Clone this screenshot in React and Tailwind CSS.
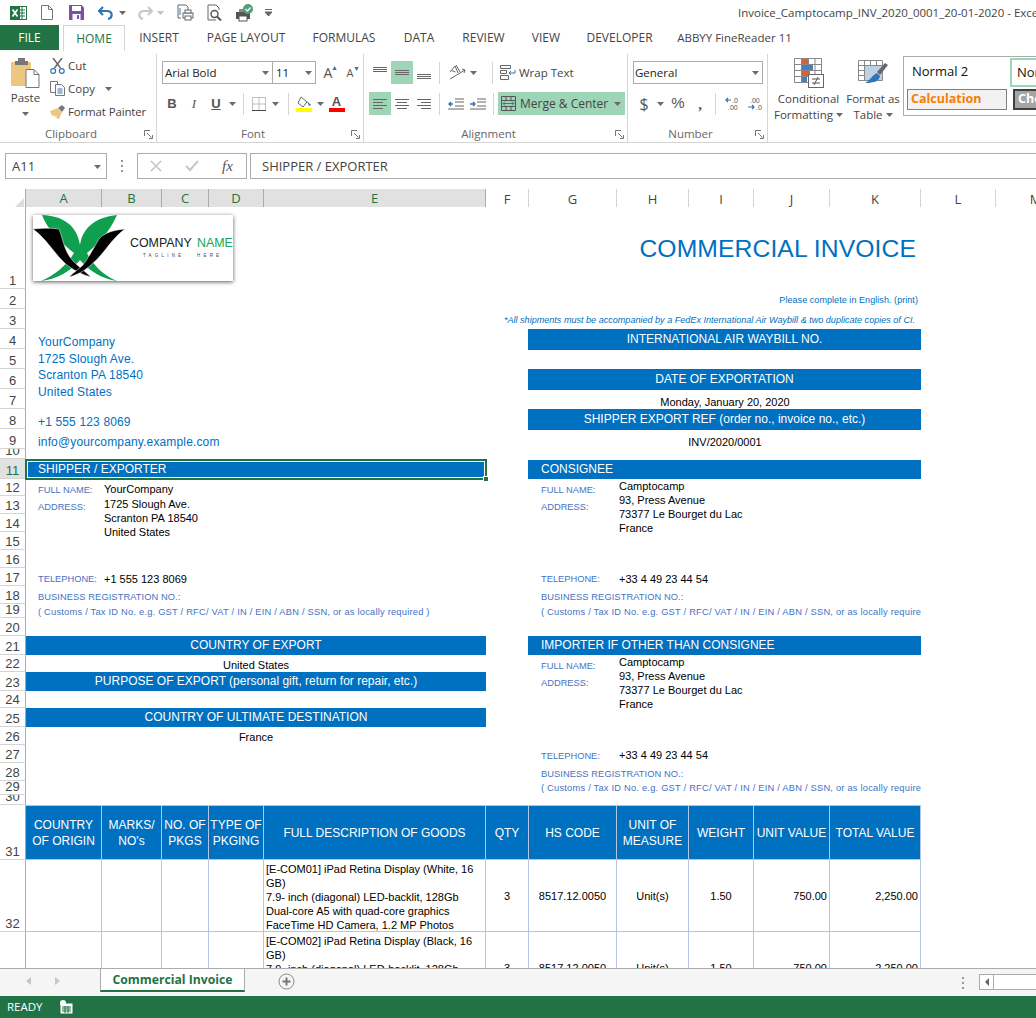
import React from 'react';

const SHEET_COLS = 'grid-cols-[26px_76px_60px_47px_55px_222px_43px_88px_72px_65px_76px_91px_75px_80px]';

const Chevron = ({ className = '' }) => (
  <svg width="7" height="4" viewBox="0 0 7 4" className={`shrink-0 ${className}`}>
    <path d="M0 0h7L3.5 4z" fill="#6a6a6a" />
  </svg>
);

const Launcher = () => (
  <svg width="9" height="9" viewBox="0 0 9 9">
    <path d="M0.5 6V0.5H6M3 3l4.5 4.5M8.5 5v3.5H5" fill="none" stroke="#777" />
  </svg>
);

const Sep = ({ className = 'mx-[5px]' }) => <div className={`w-px h-[22px] bg-[#d4d4d4] shrink-0 ${className}`} />;

const Btn = ({ w = 'w-[22px]', active, children }) => (
  <div className={`${w} h-[23px] shrink-0 flex items-center justify-center ${active ? 'bg-[#9fd5b7]' : ''}`}>{children}</div>
);

const Lines = ({ ys, widths, x = [] }) => (
  <svg width="16" height="16" viewBox="0 0 16 16">
    {ys.map((y, i) => (
      <rect key={i} x={x[i] ?? 1} y={y} width={widths[i]} height="1" fill="#666" />
    ))}
  </svg>
);

const ExcelLogo = () => (
  <svg width="17" height="16" viewBox="0 0 17 16" className="shrink-0">
    <rect x="6" y="1.5" width="10.5" height="13" fill="#fff" stroke="#217346" />
    <path d="M9 5h6M9 8h6M9 11h6M12 2v12" stroke="#217346" />
    <rect x="0" y="1" width="10" height="14" fill="#217346" />
    <path d="M2.5 4.5l5 7M7.5 4.5l-5 7" stroke="#fff" strokeWidth="1.7" />
  </svg>
);

const PrintPreview = () => (
  <svg width="17" height="17" viewBox="0 0 17 17">
    <path d="M1 1h8l2 2v3M1 1v13h3" fill="#fff" stroke="#666" />
    <rect x="6" y="9" width="10" height="5" fill="#fff" stroke="#666" />
    <rect x="8" y="6" width="6" height="3" fill="#fff" stroke="#666" />
    <rect x="8" y="12" width="6" height="4" fill="#fff" stroke="#666" />
    <path d="M3 4v7" stroke="#2f75b5" />
  </svg>
);

const Magnifier = () => (
  <svg width="16" height="17" viewBox="0 0 16 17">
    <path d="M1 1h8l3 3v2M1 1v15h8" fill="#fff" stroke="#666" />
    <circle cx="7.5" cy="10" r="3.5" fill="#fff" stroke="#555" strokeWidth="1.4" />
    <path d="M10 12.5l4 4" stroke="#555" strokeWidth="2" />
  </svg>
);

const QuickPrint = () => (
  <svg width="18" height="18" viewBox="0 0 18 18">
    <rect x="0" y="8" width="14" height="7" fill="#555" />
    <rect x="3" y="5" width="8" height="3" fill="#888" />
    <rect x="3" y="12" width="8" height="5" fill="#fff" stroke="#555" />
    <circle cx="12" cy="5" r="5" fill="#4f9e7c" />
    <path d="M9.5 5l2 2 3-3.5" fill="none" stroke="#fff" strokeWidth="1.3" />
  </svg>
);

const TitleBar = () => (
  <div className="h-[25px] flex items-center bg-white whitespace-nowrap overflow-hidden">
    <div className="w-[738px] shrink-0 flex items-center pl-[10px]">
      <ExcelLogo />
      <svg width="12" height="15" viewBox="0 0 12 15" className="ml-[14px]">
        <path d="M0.5 0.5h7l4 4v10h-11z" fill="#fff" stroke="#777" />
        <path d="M7.5 0.5v4h4" fill="none" stroke="#777" />
      </svg>
      <svg width="15" height="15" viewBox="0 0 15 15" className="ml-[16px]">
        <path d="M0 0h12.5L15 2.5V15H0z" fill="#7d4fa8" />
        <rect x="3" y="1" width="9" height="5" fill="#fff" />
        <rect x="3.5" y="9" width="8" height="6" fill="#fff" />
        <rect x="8" y="10" width="2" height="4" fill="#7d4fa8" />
      </svg>
      <svg width="16" height="14" viewBox="0 0 16 14" className="ml-[14px]">
        <path d="M5 1L1 5l4 4M1.5 5H9c6 0 6 7 1 8" fill="none" stroke="#2f75b5" strokeWidth="2.2" />
      </svg>
      <Chevron className="ml-[5px]" />
      <svg width="16" height="14" viewBox="0 0 16 14" className="ml-[11px]">
        <path d="M11 1l4 4-4 4M14.5 5H7c-6 0-6 7-1 8" fill="none" stroke="#c8c8c8" strokeWidth="2.2" />
      </svg>
      <div className="ml-[4px] opacity-40"><Chevron /></div>
      <div className="ml-[13px]"><PrintPreview /></div>
      <div className="ml-[13px]"><Magnifier /></div>
      <div className="ml-[13px]"><QuickPrint /></div>
      <svg width="7" height="7" viewBox="0 0 7 7" className="ml-[11px]">
        <path d="M0 0.5h7M0 3h7l-3.5 4z" stroke="#666" fill="#666" strokeWidth="1" />
      </svg>
    </div>
    <div className="shrink-0 text-[11.5px] text-[#444]">Invoice_Camptocamp_INV_2020_0001_20-01-2020 - Excel</div>
  </div>
);

const TABS = [
  ['INSERT', 'w-[68px]'],
  ['PAGE LAYOUT', 'w-[106px]'],
  ['FORMULAS', 'w-[90px]'],
  ['DATA', 'w-[60px]'],
  ['REVIEW', 'w-[69px]'],
  ['VIEW', 'w-[56px]'],
  ['DEVELOPER', 'w-[91px]'],
  ['ABBYY FineReader 11', 'w-[139px] text-[11.5px]'],
];

const TabRow = () => (
  <div className="h-[25px] flex text-[12px] text-[#444] whitespace-nowrap">
    <div className="w-[59px] bg-[#217346] text-white flex items-center justify-center">FILE</div>
    <div className="w-[4px]" />
    <div className="w-[62px] border border-b-0 border-[#d4d4d4] bg-white text-[#217346] flex items-center justify-center relative z-10 h-[26px]">HOME</div>
    {TABS.map(([label, w]) => (
      <div key={label} className={`${w} flex items-center justify-center`}>{label}</div>
    ))}
  </div>
);

const Group = ({ w, label, launcher, children }) => (
  <div className={`${w} h-[88px] shrink-0 flex flex-col border-r border-[#d4d4d4]`}>
    <div className="flex-1 min-h-0">{children}</div>
    <div className="h-[16px] pr-[14px] relative flex items-center justify-center text-[#666] text-[11.5px]">
      {label}
      {launcher && <div className="absolute right-[3px] top-[4px] flex"><Launcher /></div>}
    </div>
  </div>
);

const Clipboard = () => (
  <Group w="w-[157px]" label="Clipboard" launcher>
    <div className="flex">
      <div className="w-[50px] flex flex-col items-center pt-[4px] pl-[1px]">
        <svg width="29" height="30" viewBox="0 0 29 30">
          <rect x="0" y="4" width="20" height="24" rx="1" fill="#edc77f" />
          <rect x="7" y="0" width="7" height="5" fill="#777" />
          <rect x="4" y="3" width="13" height="4" fill="#777" />
          <path d="M15 11.5h8l5 5v13H15z" fill="#fff" stroke="#777" />
          <path d="M23 11.5v5h5" fill="none" stroke="#777" />
        </svg>
        <div className="text-[11.5px] text-[#444] mt-[2px] leading-[16px]">Paste</div>
        <Chevron className="mt-[6px]" />
      </div>
      <div className="flex flex-col text-[11.5px] text-[#444]">
        <div className="h-[23px] flex items-center gap-[3px]">
          <svg width="15" height="16" viewBox="0 0 15 16">
            <path d="M3 0l7.5 10M12 0L4.5 10" stroke="#666" strokeWidth="1.5" />
            <circle cx="3.2" cy="13" r="2.4" fill="#fff" stroke="#2f75b5" strokeWidth="1.2" />
            <circle cx="11.8" cy="13" r="2.4" fill="#fff" stroke="#2f75b5" strokeWidth="1.2" />
          </svg>
          Cut
        </div>
        <div className="h-[23px] flex items-center gap-[3px]">
          <svg width="15" height="15" viewBox="0 0 15 15">
            <path d="M0.5 0.5h7v11h-7z" fill="#fff" stroke="#777" />
            <path d="M5.5 3.5h6l3 3v8h-9z" fill="#fff" stroke="#777" />
            <path d="M7.5 8h5M7.5 10h5M7.5 12h5" stroke="#2f75b5" />
          </svg>
          Copy
          <Chevron className="ml-[7px]" />
        </div>
        <div className="h-[23px] flex items-center gap-[3px] whitespace-nowrap tracking-[-0.15px]">
          <svg width="15" height="14" viewBox="0 0 15 14">
            <path d="M8 3l4-3 3 3-3 4z" fill="#777" />
            <path d="M0 6l8-3 4 4-3 7-3-1 1-2-2 1-1-2-2 1z" fill="#edc77f" />
          </svg>
          Format Painter
        </div>
      </div>
    </div>
  </Group>
);

const Font = () => (
  <Group w="w-[207px]" label="Font" launcher>
    <div className="pl-[5px] pt-[7px] text-[#444]">
      <div className="flex items-center h-[23px]">
        <div className="w-[111px] h-[23px] border border-[#ababab] flex items-center justify-between pl-[2px] pr-[3px] text-[11.5px] text-[#222]">
          Arial Bold <Chevron />
        </div>
        <div className="w-[43px] h-[23px] border border-l-0 border-[#ababab] flex items-center justify-between pl-[3px] pr-[3px] text-[11.5px] text-[#222]">
          11 <Chevron />
        </div>
        <div className="w-[24px] text-center text-[14px] leading-none text-[#555] relative">
          A<span className="absolute right-[2px] top-[-2px] text-[7px] text-[#2f75b5]">▲</span>
        </div>
        <div className="w-[20px] text-center text-[11px] leading-none text-[#555] relative">
          A<span className="absolute right-[0px] top-[-2px] text-[7px] text-[#2f75b5]">▼</span>
        </div>
      </div>
      <div className="flex items-center mt-[8px] text-[#555] font-['Liberation_Sans',sans-serif] -ml-[1px]">
        <Btn><b className="text-[13px]">B</b></Btn>
        <Btn><i className="text-[13px] font-['Liberation_Serif',serif]">I</i></Btn>
        <Btn><span className="text-[13px] underline font-bold">U</span></Btn>
        <Btn w="w-[11px]"><Chevron /></Btn>
        <Sep className="ml-[5px] mr-[6px]" />
        <Btn w="w-[18px]">
          <svg width="14" height="14" viewBox="0 0 14 14">
            <path d="M0.5 0.5h13v13h-13zM7 0.5v13M0.5 7h13" fill="none" stroke="#888" strokeDasharray="1 1" />
            <path d="M0 13.5h14" stroke="#444" />
          </svg>
        </Btn>
        <Btn w="w-[15px]"><Chevron /></Btn>
        <Sep className="ml-[5px] mr-[6px]" />
        <Btn w="w-[18px]">
          <svg width="16" height="16" viewBox="0 0 16 16">
            <path d="M5 1l6 5-4 5-5-4z" fill="#fff" stroke="#666" />
            <path d="M11 5l4 4-2 1z" fill="#2f75b5" />
            <rect y="12" width="16" height="4" fill="#ffff00" />
          </svg>
        </Btn>
        <Btn w="w-[15px]"><Chevron /></Btn>
        <Btn w="w-[17px]">
          <div className="relative flex flex-col items-center">
            <b className="text-[13px] leading-[13px] text-[#555]">A</b>
            <div className="w-[16px] h-[4px] bg-[#ff0000]" />
          </div>
        </Btn>
      </div>
    </div>
  </Group>
);

const Alignment = () => (
  <Group w="w-[264px]" label="Alignment" launcher>
    <div className="pl-[5px] pt-[7px] flex flex-col gap-[8px] text-[12px] text-[#444]">
      <div className="flex items-center">
        <Btn w="w-[22px]"><Lines ys={[2, 4, 6]} widths={[14, 14, 14]} /></Btn>
        <Btn w="w-[22px]" active><Lines ys={[5, 7, 9]} widths={[14, 14, 14]} /></Btn>
        <Btn w="w-[22px]"><Lines ys={[9, 11, 13]} widths={[14, 14, 14]} /></Btn>
        <Sep className="ml-[4px] mr-[7px]" />
        <Btn w="w-[20px]">
          <svg width="17" height="17" viewBox="0 0 17 17">
            <path d="M1 8l5-6 3 7M2.5 6.5l4 1.5M7 1l4 7M1 15l15-9M13 5l3 1-1 3" fill="none" stroke="#666" />
          </svg>
        </Btn>
        <Btn w="w-[12px]"><Chevron /></Btn>
        <Sep className="ml-[13px] mr-[7px]" />
        <svg width="16" height="15" viewBox="0 0 16 15" className="shrink-0">
          <path d="M0.5 0.5h10v3h-10zM0.5 5.5h6v3h-6zM0.5 10.5h8v4h-8z" fill="none" stroke="#666" />
          <path d="M15 5v3h-6M11 6l-2 2 2 2" fill="none" stroke="#2f75b5" />
        </svg>
        <span className="ml-[3px] text-[11.5px]">Wrap Text</span>
      </div>
      <div className="flex items-center">
        <Btn w="w-[22px]" active><Lines ys={[3, 6, 9, 12]} widths={[14, 10, 14, 10]} /></Btn>
        <Btn w="w-[22px]"><Lines ys={[3, 6, 9, 12]} widths={[14, 10, 14, 10]} x={[1, 3, 1, 3]} /></Btn>
        <Btn w="w-[22px]"><Lines ys={[3, 6, 9, 12]} widths={[14, 10, 14, 10]} x={[1, 5, 1, 5]} /></Btn>
        <Sep className="ml-[4px] mr-[5px]" />
        <Btn w="w-[22px]">
          <svg width="16" height="12" viewBox="0 0 16 12">
            <path d="M7 1h9M7 4h9M7 8h9M0 11h16" stroke="#666" />
            <path d="M5 6H1M3 4L1 6l2 2" fill="none" stroke="#2f75b5" strokeWidth="1.4" />
          </svg>
        </Btn>
        <Btn w="w-[22px]">
          <svg width="16" height="12" viewBox="0 0 16 12">
            <path d="M7 1h9M7 4h9M7 8h9M0 11h16" stroke="#666" />
            <path d="M0 6h5M3 4l2 2-2 2" fill="none" stroke="#2f75b5" strokeWidth="1.4" />
          </svg>
        </Btn>
        <Sep className="ml-[4px] mr-[4px]" />
        <div className="w-[127px] h-[23px] bg-[#9fd5b7] flex items-center pl-[3px] pr-[4px]">
          <svg width="15" height="15" viewBox="0 0 15 15" className="shrink-0">
            <path d="M0.5 0.5h14v14h-14zM0.5 4.5h14M0.5 10.5h14M5 0.5v4M10 0.5v4M5 10.5v4M10 10.5v4" fill="none" stroke="#555" />
            <path d="M2 7.5h11M4 5.5l-2 2 2 2M11 5.5l2 2-2 2" fill="none" stroke="#2f75b5" />
          </svg>
          <span className="ml-[4px] flex-1">Merge &amp; Center</span>
          <Chevron />
        </div>
      </div>
    </div>
  </Group>
);

const NumberGroup = () => (
  <Group w="w-[140px]" label="Number" launcher>
    <div className="pl-[5px] pt-[7px] text-[#444]">
      <div className="w-[130px] h-[23px] border border-[#ababab] flex items-center justify-between pl-px pr-[3px] text-[11.5px] text-[#222]">
        General <Chevron />
      </div>
      <div className="flex items-center mt-[8px]">
        <Btn w="w-[22px]"><span className="text-[16px] text-[#555]">$</span></Btn>
        <Btn w="w-[10px]"><Chevron /></Btn>
        <Btn w="w-[26px]"><span className="text-[15px] text-[#555] font-['Liberation_Sans',sans-serif]">%</span></Btn>
        <Btn w="w-[18px]"><b className="text-[15px] text-[#555] leading-[6px] font-['Liberation_Serif',serif]">,</b></Btn>
        <Sep className="ml-[6px] mr-[6px]" />
        <Btn w="w-[22px]">
          <svg width="16" height="14" viewBox="0 0 16 14">
            <text x="7" y="6" fontSize="7" fill="#555" fontFamily="Liberation Sans">.0</text>
            <text x="3" y="13" fontSize="7" fill="#555" fontFamily="Liberation Sans">.00</text>
            <path d="M6 3H1M3 1L1 3l2 2" fill="none" stroke="#2f75b5" strokeWidth="1.2" />
          </svg>
        </Btn>
        <Btn w="w-[22px]">
          <svg width="16" height="14" viewBox="0 0 16 14">
            <text x="3" y="6" fontSize="7" fill="#555" fontFamily="Liberation Sans">.00</text>
            <text x="9" y="13" fontSize="7" fill="#555" fontFamily="Liberation Sans">.0</text>
            <path d="M1 10h6M5 8l2 2-2 2" fill="none" stroke="#2f75b5" strokeWidth="1.2" />
          </svg>
        </Btn>
      </div>
    </div>
  </Group>
);

const Styles = () => (
  <div className="flex-1 flex min-w-0 text-[11.5px] text-[#444] whitespace-nowrap">
    <div className="w-[81px] shrink-0 flex flex-col items-center pt-[4px]">
      <svg width="30" height="30" viewBox="0 0 30 30">
        <path d="M0.5 0.5h27v24h-27zM7.5 0.5v24M14.5 0.5v24M21 0.5v24M0.5 6.5h27M0.5 12.5h27M0.5 18.5h27" fill="#fff" stroke="#888" />
        <rect x="8" y="1" width="6" height="5" fill="#d9603b" />
        <rect x="8" y="7" width="11" height="5" fill="#4a7ebb" />
        <rect x="8" y="13" width="8" height="5" fill="#d9603b" />
        <rect x="8" y="19" width="5" height="5" fill="#4a7ebb" />
        <rect x="14.5" y="16.5" width="15" height="13" fill="#fff" stroke="#666" />
        <path d="M18 21h8M18 25h8M24 19l-4 8" stroke="#555" />
      </svg>
      <div className="mt-[3px] leading-[16px]">Conditional</div>
      <div className="leading-[16px] flex items-center gap-[3px]">Formatting <Chevron /></div>
    </div>
    <div className="w-[48px] shrink-0 flex flex-col items-center pt-[4px]">
      <svg width="30" height="30" viewBox="0 0 30 30">
        <path d="M0.5 2.5h24v20h-24zM6.5 2.5v20M12.5 2.5v20M18.5 2.5v20M0.5 7.5h24M0.5 12.5h24M0.5 17.5h24" fill="#fff" stroke="#888" />
        <rect x="7" y="8" width="17" height="14" fill="#bcd0e6" />
        <path d="M30 7l-8 10-3-3 8-9z" fill="#666" />
        <path d="M19 15l3 3c-1 5-5 7-15 7 5-2 6-7 12-10z" fill="#2f75b5" />
      </svg>
      <div className="mt-[3px] leading-[16px]">Format as</div>
      <div className="leading-[16px] flex items-center gap-[3px]">Table <Chevron /></div>
    </div>
    <div className="ml-[6px] mt-[2px] h-[60px] flex-1 border border-r-0 border-[#ababab] overflow-hidden pl-[3px] pt-[1px]">
      <div className="flex h-[29px]">
        <div className="w-[103px] shrink-0 flex items-center pl-[5px] pb-px text-[13px] text-[#111]">Normal 2</div>
        <div className="w-[40px] shrink-0 border-2 border-[#9fd5b7] flex items-center pl-[5px] text-[13px] text-[#111]">Normal</div>
      </div>
      <div className="flex h-[21px] mt-[2px]">
        <div className="w-[100px] shrink-0 border border-[#7f7f7f] bg-[#f2f2f2] flex items-center pl-[3px] text-[12.5px] font-bold text-[#fa7d00]">Calculation</div>
        <div className="ml-[6px] w-[40px] shrink-0 border-2 border-double border-[#3f3f3f] bg-[#a5a5a5] flex items-center pl-[3px] text-[12.5px] font-bold text-white">Check Cell</div>
      </div>
    </div>
  </div>
);

const Ribbon = () => (
  <div className="h-[93px] border-b border-[#d4d4d4] bg-white pt-[4px] flex">
    <Clipboard />
    <Font />
    <Alignment />
    <NumberGroup />
    <Styles />
  </div>
);

const FormulaBar = () => (
  <div className="flex items-stretch h-[26px] mt-[10px] pl-[5px] text-[#444]">
    <div className="w-[102px] border border-[#ababab] flex items-center justify-between pl-[6px] pr-[5px] pt-px text-[13px]">
      A11 <Chevron />
    </div>
    <div className="w-[30px] flex items-center justify-center">
      <svg width="2" height="12" viewBox="0 0 2 12"><path d="M1 0v2M1 5v2M1 10v2" stroke="#999" strokeWidth="2" /></svg>
    </div>
    <div className="w-[110px] border border-[#ababab] flex items-center pl-[12px]">
      <svg width="12" height="12" viewBox="0 0 12 12"><path d="M1 1l10 10M11 1L1 11" stroke="#c6c6c6" strokeWidth="1.6" /></svg>
      <svg width="14" height="12" viewBox="0 0 14 12" className="ml-[23px]"><path d="M1 6l4 4 8-9" fill="none" stroke="#c6c6c6" strokeWidth="2" /></svg>
      <i className="ml-[23px] text-[15px] font-['Liberation_Serif',serif] text-[#555]">fx</i>
    </div>
    <div className="flex-1 ml-[3px] border border-r-0 border-[#ababab] flex items-center pl-[11px] pt-px text-[13px]">SHIPPER / EXPORTER</div>
  </div>
);

const COL_LABELS = ['A', 'B', 'C', 'D', 'E', 'F', 'G', 'H', 'I', 'J', 'K', 'L', 'M'];
const SELECTED_COLS = ['A', 'B', 'C', 'D', 'E'];

const ColHeaders = () => (
  <div className={`grid ${SHEET_COLS} h-[18px] mt-[10px] text-[13px] overflow-hidden`}>
    <div className="border-r border-b border-[#ababab] flex items-end justify-end p-[1px]">
      <svg width="11" height="11" viewBox="0 0 11 11"><path d="M11 0v11H0z" fill="#dcdcdc" /></svg>
    </div>
    {COL_LABELS.map((l) =>
      SELECTED_COLS.includes(l) ? (
        <div key={l} className="bg-[#e1e1e1] border-r border-[#ababab] border-b-2 border-b-[#217346] text-[#217346] flex items-center justify-center font-medium">{l}</div>
      ) : (
        <div key={l} className="border-r border-[#d4d4d4] border-b border-b-[#ababab] text-[#444] flex items-center justify-center">{l}</div>
      )
    )}
  </div>
);

const ROW_NUMS = Array.from({ length: 33 }, (_, i) => i + 1);

const RowHeader = ({ n }) => (
  <div className={`col-start-1 overflow-hidden border-r border-r-[#ababab] border-b border-b-[#d4d4d4] flex items-end justify-center text-[13px] leading-[15px] ${n === 11 ? 'bg-[#e1e1e1] text-[#217346] font-medium' : 'text-[#444]'}`}>
    {n}
  </div>
);

const Bar = ({ className = '', children }) => (
  <div className={`bg-[#0070c0] text-white text-[12px] leading-[19px] flex justify-center whitespace-nowrap ${className}`}>{children}</div>
);

const Label = ({ className = '', children }) => (
  <div className={`text-[9.3px] text-[#4472c4] whitespace-nowrap ${className}`}>{children}</div>
);

const Val = ({ className = '', children }) => (
  <div className={`text-[11px] leading-[14px] text-black whitespace-pre ${className}`}>{children}</div>
);

const CUSTOMS = '( Customs / Tax ID No. e.g. GST / RFC/ VAT / IN / EIN / ABN / SSN, or as locally required )';
const ADDRESS = 'Camptocamp\n93, Press Avenue\n73377 Le Bourget du Lac\nFrance';

const HEADER_CELL = 'bg-[#0070c0] text-white text-[12px] leading-[16px] text-center flex items-center justify-center pt-px border-r border-b border-t border-[#b4c6e7] row-start-31';
const BODY_CELL = 'border-r border-b border-[#b4c6e7] text-[11px] text-black flex items-center justify-center pt-[2px]';

const Logo = () => (
  <div className="absolute left-[33px] top-[8px] w-[200px] h-[66px] bg-white shadow-[0_1px_4px_rgba(0,0,0,0.65)]">
    <svg width="200" height="66" viewBox="0 0 200 66">
      <path d="M9 0C30 1 44 10 47 30 50 10 66 2 84 0 76 18 64 30 54 38 60 50 70 60 84 66 70 64 56 56 47 45 38 56 24 64 8 66 22 60 34 50 41 38 28 28 14 14 9 0Z" fill="#0ea04f" />
      <path d="M0 14C10 13 20 13 26 14 30 24 31 36 40 46 46 52 54 58 58 62 50 60 42 56 34 50 22 40 14 24 0 14Z" fill="#000" stroke="#fff" strokeWidth="0.5" />
      <path d="M92 14C82 15 72 17 66 24 60 34 56 42 50 50 46 54 40 58 36 62 44 60 52 56 60 48 72 38 78 24 92 14Z" fill="#000" stroke="#fff" strokeWidth="0.5" />
      <text x="97" y="32" fontSize="12.4" fontFamily="Liberation Sans" fill="#222">COMPANY</text>
      <text x="164" y="32" fontSize="12.4" fontFamily="Liberation Sans" fill="#17a556">NAME</text>
      <text x="110" y="42" fontSize="4.5" letterSpacing="3.2" fontFamily="Liberation Sans" fill="#444">TAGLINE</text>
      <text x="164" y="42" fontSize="4.5" letterSpacing="3.2" fontFamily="Liberation Sans" fill="#444">HERE</text>
    </svg>
  </div>
);

const GoodsRow = ({ row }) => {
  const rowClass = row === 32 ? 'row-start-32' : 'row-start-33';
  return (
    <>
      <div className={`${BODY_CELL} ${rowClass} col-start-2`} />
      <div className={`${BODY_CELL} ${rowClass} col-start-3`} />
      <div className={`${BODY_CELL} ${rowClass} col-start-4`} />
      <div className={`${BODY_CELL} ${rowClass} col-start-5`} />
      <div className={`border-r border-b border-[#b4c6e7] text-[11px] leading-[14px] text-black pl-[2px] pt-[2px] ${rowClass} col-start-6`}>
        {row === 32 ? '[E-COM01] iPad Retina Display (White, 16 GB)' : '[E-COM02] iPad Retina Display (Black, 16 GB)'}
        <br />7.9‑ inch (diagonal) LED-backlit, 128Gb
        <br />Dual-core A5 with quad-core graphics
        <br />FaceTime HD Camera, 1.2 MP Photos
      </div>
      <div className={`${BODY_CELL} ${rowClass} col-start-7`}>3</div>
      <div className={`${BODY_CELL} ${rowClass} col-start-8`}>8517.12.0050</div>
      <div className={`${BODY_CELL} ${rowClass} col-start-9`}>Unit(s)</div>
      <div className={`${BODY_CELL} ${rowClass} col-start-10`}>1.50</div>
      <div className={`${BODY_CELL} ${rowClass} col-start-11 justify-end! pr-[2px]`}>750.00</div>
      <div className={`${BODY_CELL} ${rowClass} col-start-12 justify-end! pr-[2px]`}>2,250.00</div>
    </>
  );
};

const Sheet = () => (
  <div className="flex-1 min-h-0 overflow-hidden relative font-['Liberation_Sans',Arial,sans-serif]">
    <div className="absolute inset-x-0 top-0 z-10 pointer-events-none">
      <Logo />
    </div>
    <div className={`grid ${SHEET_COLS} grid-rows-[82px_20px_20px_20px_20px_20px_20px_20px_20px_10px_20px_17px_18px_18px_18px_18px_18px_18px_14px_18px_19px_17px_19px_17px_19px_18px_18px_18px_14px_10px_55px_72px_72px]`}>
      {ROW_NUMS.map((n) => <RowHeader key={n} n={n} />)}

      <div className="col-start-8 col-span-5 row-start-1 flex items-center justify-end pr-[5px] pt-[2px] text-[24.7px] tracking-[0.1px] text-[#0070c0] whitespace-nowrap">COMMERCIAL INVOICE</div>
      <div className="col-start-8 col-span-5 row-start-2 flex items-center justify-end pr-[3px] pt-[3px] text-[9px] tracking-[0.06px] text-[#0070c0] whitespace-nowrap">Please complete in English. (print)</div>
      <div className="col-start-7 col-span-6 row-start-3 flex items-center justify-end pr-[6px] pt-[3px] text-[9.07px] italic text-[#0070c0] whitespace-nowrap">*All shipments must be accompanied by a FedEx International Air Waybill &amp; two duplicate copies of CI.</div>

      <div className="col-start-2 col-span-5 row-start-4 row-span-4 pl-[12px] pt-[5px] text-[12px] tracking-[0.15px] leading-[16.5px] text-[#0070c0]">
        YourCompany<br />1725 Slough Ave.<br />Scranton PA 18540<br />United States
      </div>
      <div className="col-start-2 col-span-5 row-start-8 pl-[12px] pt-[4px] text-[12px] tracking-[0.15px] text-[#0070c0]">+1 555 123 8069</div>
      <div className="col-start-2 col-span-5 row-start-9 pl-[12px] pt-[4px] text-[12px] tracking-[0.15px] text-[#0070c0]">info@yourcompany.example.com</div>

      <Bar className="col-start-8 col-span-5 row-start-4 h-[21px] pt-px -ml-px">INTERNATIONAL AIR WAYBILL NO.</Bar>
      <Bar className="col-start-8 col-span-5 row-start-6 h-[21px] pt-px -ml-px">DATE OF EXPORTATION</Bar>
      <Val className="col-start-8 col-span-5 row-start-7 text-center pt-[6px]">Monday, January 20, 2020</Val>
      <Bar className="col-start-8 col-span-5 row-start-8 h-[21px] pt-px -ml-px">SHIPPER EXPORT REF (order no., invoice no., etc.)</Bar>
      <Val className="col-start-8 col-span-5 row-start-9 text-center pt-[6px]">INV/2020/0001</Val>

      <div className="col-start-2 col-span-5 row-start-11 relative h-[21px] -ml-px -mr-px border-2 border-[#217346] bg-[#0070c0] shadow-[inset_0_0_0_1px_#fff] pl-[11px] text-white text-[12px] leading-[17px] z-20">
        SHIPPER / EXPORTER
        <div className="absolute right-[-4px] bottom-[-4px] w-[6px] h-[6px] bg-[#217346] border border-white" />
      </div>
      <Bar className="col-start-8 col-span-5 row-start-11 h-[19px] mt-px -ml-px justify-start! pl-[13px]">CONSIGNEE</Bar>

      <Label className="col-start-2 col-span-2 row-start-12 pl-[12px] pt-[5px]">FULL NAME:</Label>
      <Val className="col-start-3 col-span-4 row-start-12 pl-[2px] pt-[3px]">YourCompany</Val>
      <Label className="col-start-2 col-span-2 row-start-13 pl-[12px] pt-[5px]">ADDRESS:</Label>
      <Val className="col-start-3 col-span-4 row-start-13 row-span-4 pl-[2px] pt-[1px]">{'1725 Slough Ave.\nScranton PA 18540\nUnited States'}</Val>
      <Label className="col-start-2 col-span-2 row-start-17 pl-[12px] pt-[5px]">TELEPHONE:</Label>
      <Val className="col-start-3 col-span-4 row-start-17 pl-[2px] pt-[4px]">+1 555 123 8069</Val>
      <Label className="col-start-2 col-span-5 row-start-18 pl-[12px] pt-[5px] tracking-[0.08px]">BUSINESS REGISTRATION NO.:</Label>
      <Label className="col-start-2 col-span-5 row-start-19 pl-[12px] pt-[2px] tracking-[0.22px]">{CUSTOMS}</Label>

      <Label className="col-start-8 row-start-12 pl-[12px] pt-[5px]">FULL NAME:</Label>
      <Label className="col-start-8 row-start-13 pl-[12px] pt-[5px]">ADDRESS:</Label>
      <Val className="col-start-9 col-span-4 row-start-12 row-span-5 pl-[2px]">{ADDRESS}</Val>
      <Label className="col-start-8 row-start-17 pl-[12px] pt-[5px]">TELEPHONE:</Label>
      <Val className="col-start-9 col-span-4 row-start-17 pl-[2px] pt-[4px]">+33 4 49 23 44 54</Val>
      <Label className="col-start-8 col-span-5 row-start-18 pl-[12px] pt-[5px] tracking-[0.08px]">BUSINESS REGISTRATION NO.:</Label>
      <Label className="col-start-8 col-span-5 row-start-19 pl-[12px] pt-[2px] tracking-[0.22px] overflow-hidden">{CUSTOMS}</Label>

      <Bar className="col-start-2 col-span-5 row-start-21">COUNTRY OF EXPORT</Bar>
      <Val className="col-start-2 col-span-5 row-start-22 text-center pt-[3px]">United States</Val>
      <Bar className="col-start-2 col-span-5 row-start-23">PURPOSE OF EXPORT (personal gift, return for repair, etc.)</Bar>
      <Bar className="col-start-2 col-span-5 row-start-25">COUNTRY OF ULTIMATE DESTINATION</Bar>
      <Val className="col-start-2 col-span-5 row-start-26 text-center pt-[3px]">France</Val>

      <Bar className="col-start-8 col-span-5 row-start-21 -ml-px justify-start! pl-[13px]">IMPORTER IF OTHER THAN CONSIGNEE</Bar>
      <Label className="col-start-8 row-start-22 pl-[12px] pt-[5px]">FULL NAME:</Label>
      <Label className="col-start-8 row-start-23 pl-[12px] pt-[5px]">ADDRESS:</Label>
      <Val className="col-start-9 col-span-4 row-start-22 row-span-4 pl-[2px]">{ADDRESS}</Val>
      <Label className="col-start-8 row-start-27 pl-[12px] pt-[5px]">TELEPHONE:</Label>
      <Val className="col-start-9 col-span-4 row-start-27 pl-[2px] pt-[3px]">+33 4 49 23 44 54</Val>
      <Label className="col-start-8 col-span-5 row-start-28 pl-[12px] pt-[5px] tracking-[0.08px]">BUSINESS REGISTRATION NO.:</Label>
      <Label className="col-start-8 col-span-5 row-start-29 pl-[12px] pt-[1px] tracking-[0.22px] overflow-hidden">{CUSTOMS}</Label>

      <div className={`${HEADER_CELL} col-start-2`}>COUNTRY<br />OF ORIGIN</div>
      <div className={`${HEADER_CELL} col-start-3`}>MARKS/<br />NO's</div>
      <div className={`${HEADER_CELL} col-start-4`}>NO. OF<br />PKGS</div>
      <div className={`${HEADER_CELL} col-start-5`}>TYPE OF<br />PKGING</div>
      <div className={`${HEADER_CELL} col-start-6`}>FULL DESCRIPTION OF GOODS</div>
      <div className={`${HEADER_CELL} col-start-7`}>QTY</div>
      <div className={`${HEADER_CELL} col-start-8`}>HS CODE</div>
      <div className={`${HEADER_CELL} col-start-9`}>UNIT OF<br />MEASURE</div>
      <div className={`${HEADER_CELL} col-start-10`}>WEIGHT</div>
      <div className={`${HEADER_CELL} col-start-11`}>UNIT VALUE</div>
      <div className={`${HEADER_CELL} col-start-12`}>TOTAL VALUE</div>

      <GoodsRow row={32} />
      <GoodsRow row={33} />
    </div>
  </div>
);

const SheetTabs = () => (
  <div className="h-[28px] shrink-0 bg-[#f5f5f5] border-t border-[#ababab] flex items-start relative">
    <div className="w-[100px] h-[23px] flex items-center pl-[26px] gap-[24px]">
      <svg width="5" height="8" viewBox="0 0 5 8"><path d="M5 0v8L0 4z" fill="#c6c6c6" /></svg>
      <svg width="5" height="8" viewBox="0 0 5 8"><path d="M0 0v8l5-4z" fill="#c6c6c6" /></svg>
    </div>
    <div className="w-[145px] h-[24px] -mt-px pt-px bg-white border border-t-[#ababab] border-x-[#ababab] border-b-2 border-b-[#217346] flex items-center justify-center text-[12.2px] font-bold text-[#217346]">
      Commercial Invoice
    </div>
    <svg width="17" height="17" viewBox="0 0 17 17" className="ml-[33px] mt-[4px]">
      <circle cx="8.5" cy="8.5" r="7.5" fill="none" stroke="#888" />
      <path d="M4.5 8.5h8M8.5 4.5v8" stroke="#777" strokeWidth="2" />
    </svg>
    <div className="flex-1" />
    <svg width="2" height="12" viewBox="0 0 2 12" className="mt-[8px] mr-[15px]"><path d="M1 0v2M1 5v2M1 10v2" stroke="#999" strokeWidth="2" /></svg>
    <div className="w-[57px] h-[16px] mt-[5px] bg-white border border-r-0 border-[#ababab] flex">
      <div className="w-[14px] border-r border-[#ababab] flex items-center justify-center">
        <svg width="4" height="8" viewBox="0 0 4 8"><path d="M4 0v8L0 4z" fill="#666" /></svg>
      </div>
    </div>
  </div>
);

const StatusBar = () => (
  <div className="h-[22px] shrink-0 bg-[#217346] text-white text-[11.5px] flex items-center pl-[7px]">
    READY
    <svg width="13" height="14" viewBox="0 0 13 14" className="ml-[17px]">
      <rect x="0.5" y="3.5" width="12" height="10" fill="#fff" />
      <circle cx="3" cy="3" r="3" fill="#fff" />
      <path d="M2 7h9M2 9h9M2 11h9M5 6v7M8 6v7" stroke="#217346" />
    </svg>
  </div>
);

const App = () => (
  <div className="w-[1036px] h-[1018px] overflow-hidden bg-white flex flex-col font-['Open_Sans',sans-serif]">
    <TitleBar />
    <TabRow />
    <Ribbon />
    <FormulaBar />
    <ColHeaders />
    <Sheet />
    <SheetTabs />
    <StatusBar />
  </div>
);

export default App;
